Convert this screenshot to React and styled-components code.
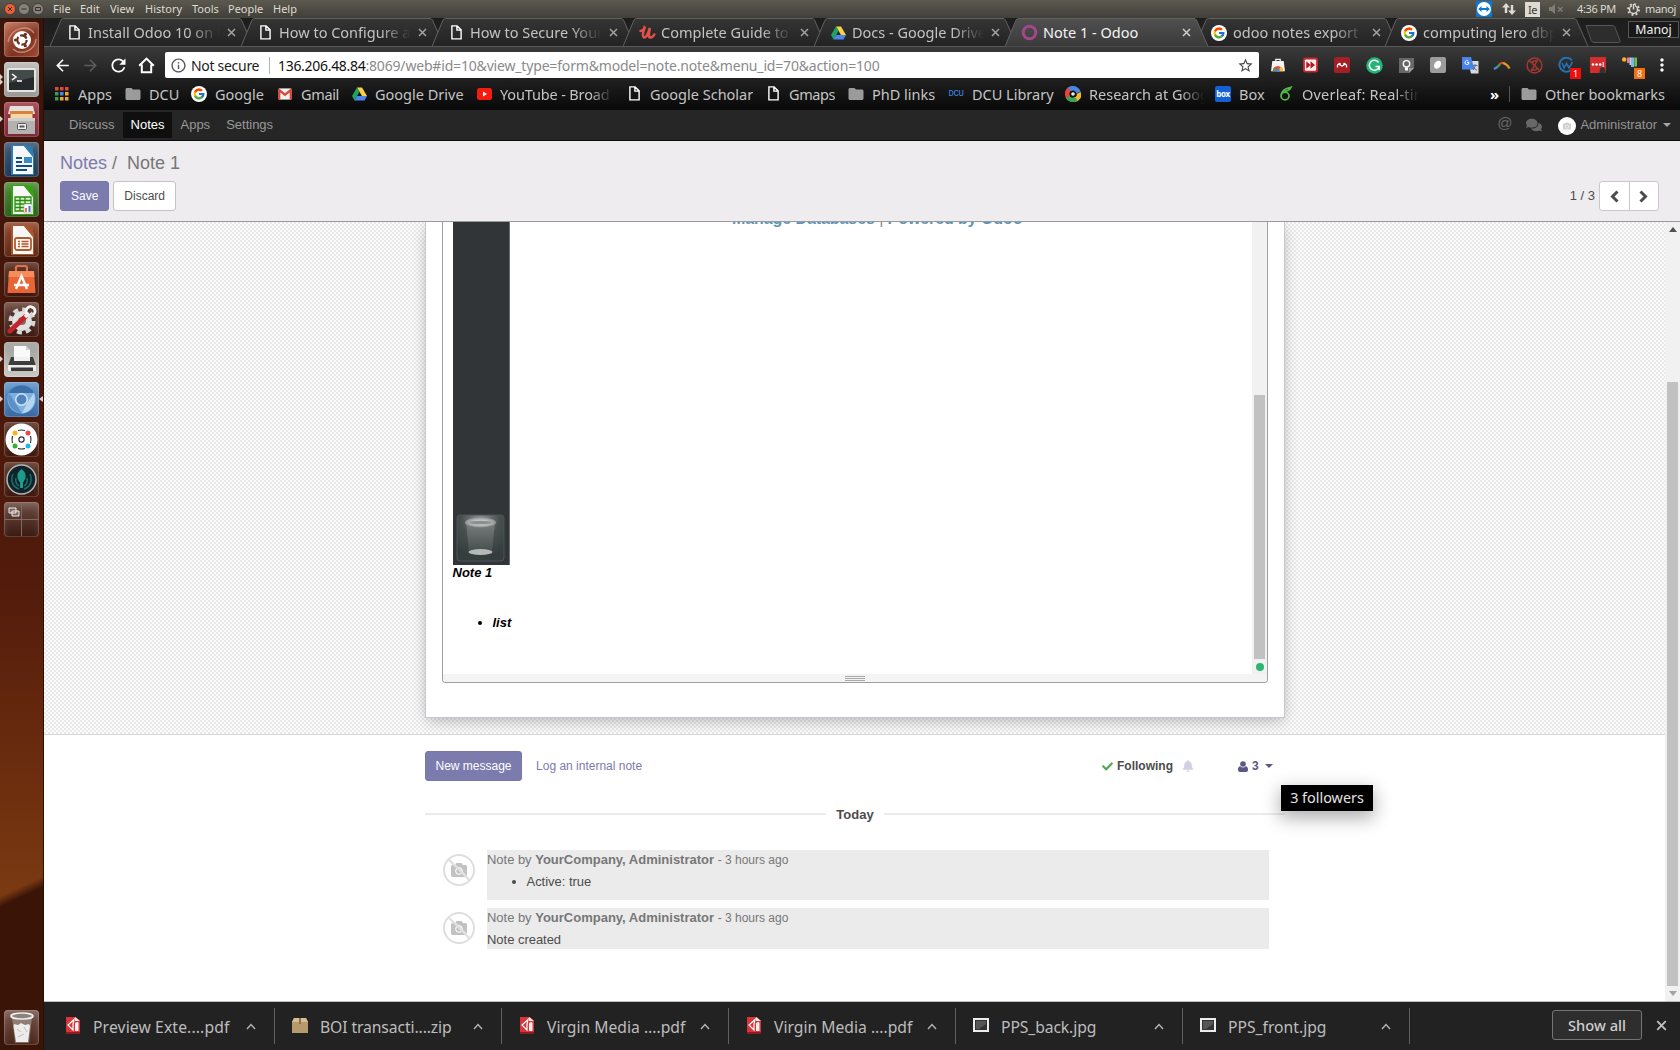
import React from "react";
import styled, { createGlobalStyle, css } from "styled-components";
import { FaCheck, FaBell, FaComments, FaCamera } from "react-icons/fa";
import { FcGoogle } from "react-icons/fc";
import { MdArrowBack, MdArrowForward, MdRefresh, MdInfoOutline, MdStarBorder, MdMoreVert, MdFolder } from "react-icons/md";

const Global = createGlobalStyle`
  html, body { margin: 0; padding: 0; background: #fff; overflow: hidden; }
  *, *::before, *::after { box-sizing: border-box; }
  svg { display: block; flex: none; }
`;

const UI = `"Noto Sans", sans-serif`;
const WEB = `"Liberation Sans", Arial, sans-serif`;

/* ---------- desktop shell ---------- */

const Desktop = styled.div`
  width: 1680px;
  height: 1050px;
  display: flex;
  flex-direction: column;
  overflow: hidden;
  font-family: ${UI};
`;

const MenuBar = styled.header`
  height: 18px;
  flex: none;
  display: flex;
  align-items: center;
  padding: 0 4px 0 4px;
  background: linear-gradient(#5b594f, #403f39);
  color: #dfdbd2;
  font-size: 11px;
  line-height: 18px;
`;

const WindowButtons = styled.div`
  display: flex;
  gap: 2px;
  width: 49px;
`;

const MenuItem = styled.span`
  width: ${(p) => p.$w}px;
  white-space: nowrap;
`;

const Indicators = styled.div`
  margin-left: auto;
  display: flex;
  align-items: center;
`;

const Indicator = styled.span`
  width: ${(p) => p.$w}px;
  display: flex;
  white-space: nowrap;
  letter-spacing: -0.35px;
`;

const KeyboardBadge = styled.span`
  width: 15px;
  height: 15px;
  background: #dfdbd2;
  color: #3c3b37;
  font-size: 11px;
  line-height: 15px;
  text-align: center;
`;

const Body = styled.div`
  flex: 1;
  min-height: 0;
  display: flex;
`;

const Launcher = styled.nav`
  width: 44px;
  flex: none;
  padding: 4px 0 5px;
  display: flex;
  flex-direction: column;
  align-items: center;
  gap: 5px;
  border-right: 1px solid #2a0f08;
  background:
    linear-gradient(155deg, transparent 83.5%, #3b1408 84.5%),
    linear-gradient(#3a150b 0%, #47170b 30%, #521b0b 55%, #6a2c0e 72%, #7c3b12 86%, #6d3010 100%);
`;

const Tile = styled.div`
  position: relative;
  width: 35px;
  height: 35px;
  flex: none;
  border-radius: 4px;
  display: flex;
  align-items: center;
  justify-content: center;
  background: ${(p) => p.$bg || "linear-gradient(#5a3022, #3d180e)"};
  box-shadow: inset 0 0 0 1px rgba(255, 255, 255, 0.16), inset 0 5px 7px rgba(255, 255, 255, 0.16);
  ${(p) => p.$last && css`margin-top: auto;`}
`;

const Pip = styled.i`
  position: absolute;
  top: ${(p) => p.$top || 14}px;
  ${(p) => (p.$right ? "right: -4px; border-right: 4px solid #d9d0cc;" : "left: -4px; border-left: 3px solid #d9d0cc;")}
  border-top: 3px solid transparent;
  border-bottom: 3px solid transparent;
`;

/* ---------- browser chrome ---------- */

const Browser = styled.main`
  flex: 1;
  min-width: 0;
  display: flex;
  flex-direction: column;
`;

const TabStrip = styled.div`
  height: 29px;
  flex: none;
  display: flex;
  padding-left: 6px;
  background: linear-gradient(#1d1d1d, #222);
  border-bottom: 1px solid #585858;
`;

const TabBox = styled.div`
  position: relative;
  width: ${(p) => (p.$narrow ? 190 : 191)}px;
  height: 29px;
  flex: none;
  display: flex;
  align-items: center;
  padding: 0 0 0 15.5px;
  z-index: ${(p) => (p.$active ? 2 : 1)};
  color: ${(p) => (p.$active ? "#f4f4f4" : "#c3c3c3")};
  font-size: 14.5px;
`;

const TabShape = styled.svg`
  position: absolute;
  left: 0;
  top: 0;
`;

const TabIcon = styled.span`
  position: relative;
  width: 17px;
  display: flex;
  justify-content: center;
`;

const TabTitle = styled.span`
  position: relative;
  width: 133px;
  margin-left: 5.5px;
  padding-bottom: 1px;
  overflow: hidden;
  white-space: nowrap;
  ${(p) => !p.$active && css`mask-image: linear-gradient(90deg, #000 76%, transparent 99%);`}
`;

const TabClose = styled.span`
  position: relative;
  margin-left: 5.5px;
`;

const NewTab = styled.svg`
  margin: 7px 0 0 10px;
`;

const ProfileButton = styled.span`
  margin: 3px 1px 0 auto;
  width: 51px;
  height: 17px;
  border: 1px solid #565656;
  background: #191919;
  color: #f1f1f1;
  font-size: 12.3px;
  line-height: 15px;
  text-align: center;
`;

const Toolbar = styled.div`
  height: 63px;
  flex: none;
  background: linear-gradient(#3a3a3a, #222 45%, #0b0b0b 95%);
`;

const NavRow = styled.div`
  height: 36px;
  display: flex;
  align-items: center;
  padding: 0 0 0 4px;
`;

const NavButton = styled.span`
  width: 28px;
  display: flex;
  justify-content: center;
  color: ${(p) => (p.$dim ? "#5c5c5c" : "#fff")};
`;

const AddressField = styled.div`
  width: 1094px;
  height: 26px;
  margin: 0 3px 0 5px;
  padding: 0 5px 0 5px;
  display: flex;
  align-items: center;
  background: #fff;
  border-radius: 2px;
  color: #8a8a8a;
  font-size: 14px;
  white-space: nowrap;
`;

const Secure = styled.span`
  margin-left: 4px;
  padding-right: 9px;
  width: 79px;
  line-height: 17px;
  border-right: 1px solid #b5b5b5;
  color: #1c1c1c;
  letter-spacing: -0.3px;
`;

const Url = styled.span`
  margin-left: 8px;
  flex: 1;
  letter-spacing: -0.175px;
  b { color: #111; font-weight: 400; letter-spacing: -0.3px; }
`;

const Extension = styled.span`
  position: relative;
  width: 32px;
  display: flex;
  justify-content: center;
`;

const Badge = styled.span`
  position: absolute;
  left: 20px;
  top: 11px;
  width: 11px;
  height: 11px;
  background: ${(p) => p.$bg};
  color: #fff;
  font-size: 9px;
  line-height: 11px;
  text-align: center;
`;

const BookmarkRow = styled.div`
  height: 27px;
  display: flex;
  align-items: center;
  padding: 0 0 6px 10px;
  color: #c4c4c4;
  font-size: 14.5px;
  line-height: 20px;
`;

const Bookmark = styled.span`
  width: ${(p) => p.$w}px;
  flex: none;
  display: flex;
  align-items: center;
  gap: 8px;
`;

const BookmarkIcon = styled.span`
  width: 16px;
  height: 16px;
  flex: none;
  display: flex;
  align-items: center;
  justify-content: center;
`;

const BookmarkText = styled.span`
  overflow: hidden;
  white-space: nowrap;
  letter-spacing: ${(p) => p.$ls || 0}px;
  ${(p) => p.$max && css`
    width: ${p.$max}px;
    mask-image: linear-gradient(90deg, #000 80%, transparent 100%);
  `}
`;

const DcuMark = styled.span`
  color: #3c8ae6;
  font: 9px/16px "Liberation Mono", monospace;
  letter-spacing: -0.4px;
`;

const BoxMark = styled.span`
  width: 16px;
  height: 16px;
  border-radius: 2px;
  background: #1461d3;
  color: #fff;
  font: bold 8px/16px "Open Sans", sans-serif;
  letter-spacing: -0.4px;
  text-align: center;
`;

const Overflow = styled.span`
  width: 19px;
  margin-left: auto;
  color: #fff;
  font-weight: 700;
  font-size: 15px;
  line-height: 16px;
`;

const Divider = styled.span`
  width: 1px;
  height: 16px;
  margin-right: 11px;
  background: #555;
`;

/* ---------- web application ---------- */

const AppNav = styled.div`
  height: 31px;
  flex: none;
  display: flex;
  align-items: center;
  padding: 0 9px 1px 17px;
  background: #262626;
  border-bottom: 1px solid #0b0b0b;
  font: 13px/26px ${WEB};
  color: #999;
`;

const AppLink = styled.span`
  padding: 0 8px;
  ${(p) => p.$active && css`background: #0f0f0f; color: #fff;`}
`;

const AppNavRight = styled.div`
  margin-left: auto;
  display: flex;
  align-items: center;
  color: #686868;
`;

const At = styled.span`
  font-size: 15px;
  margin-right: 14px;
  padding-bottom: 3px;
`;

const NavAvatar = styled.span`
  width: 18px;
  height: 18px;
  margin: 2px 4px 0 16px;
  border-radius: 50%;
  background: #fff;
  color: #cfcfcf;
  display: flex;
  align-items: center;
  justify-content: center;
`;

const UserName = styled.span`
  color: #949494;
  margin-right: 6px;
`;

const Caret = styled.i`
  border: 4px solid transparent;
  border-top-color: ${(p) => p.$color || "#a5a5a5"};
  border-bottom: 0;
`;

const ControlPanel = styled.section`
  height: 81px;
  flex: none;
  padding: 11px 21px 0 16px;
  background: #eeecee;
  border-bottom: 1px solid #9b9b9b;
  font-family: ${WEB};
  color: #4c4c4c;
`;

const Breadcrumb = styled.div`
  font-size: 18px;
  line-height: 22px;
  color: #777;
  white-space: pre;
  span { color: #7c7bad; }
`;

const ActionRow = styled.div`
  display: flex;
  align-items: center;
  margin-top: 7px;
`;

const Button = styled.button`
  height: 30px;
  padding: 0 ${(p) => (p.$tight ? 9.5 : 10)}px;
  margin: 0 4px 0 0;
  border: 1px solid ${(p) => (p.$primary ? "#7877a8" : "#c4c4c4")};
  border-radius: 3px;
  background: ${(p) => (p.$primary ? "#7c7bad" : "#fff")};
  color: ${(p) => (p.$primary ? "#fff" : "#4c4c4c")};
  font: 12px ${WEB};
`;

const Pager = styled.div`
  margin-left: auto;
  display: flex;
  align-items: center;
  font-size: 13px;
`;

const PageCount = styled.span`
  padding-bottom: 2px;
`;

const PagerButtons = styled.div`
  display: flex;
  height: 30px;
  width: 60px;
  margin-left: 4px;
  border: 1px solid #c9c9c9;
  border-radius: 3px;
  background: #fff;
  span { flex: 1; display: flex; align-items: center; justify-content: center; }
  span + span { border-left: 1px solid #c9c9c9; }
`;

const Viewport = styled.div`
  flex: 1;
  min-height: 0;
  display: flex;
  overflow: hidden;
  font-family: ${WEB};
`;

const Page = styled.div`
  flex: 1;
  min-width: 0;
  background: #fff;
`;

const SheetArea = styled.div`
  height: 513px;
  padding-left: 381px;
  overflow: hidden;
  border-bottom: 1px solid #d6d6d6;
  background: repeating-conic-gradient(#e9e9e9 0 25%, #fbfbfb 0 50%) 0 0 / 4px 4px;
`;

const Sheet = styled.div`
  width: 860px;
  height: 496px;
  padding: 0 16px;
  background: #fff;
  border: 1px solid #c8c8d3;
  border-top: 0;
  box-shadow: 0 4px 14px -2px rgba(0, 0, 0, 0.28);
`;

const Editor = styled.div`
  width: 826px;
  height: 461px;
  border: 1px solid #9f9f9f;
  border-top: 0;
  border-radius: 0 0 4px 4px;
  overflow: hidden;
`;

const EditorBody = styled.div`
  height: 452px;
  display: flex;
`;

const EditorText = styled.div`
  flex: 1;
  padding-left: 10px;
  color: #000;
  font: italic bold 13px/18px ${WEB};
  ul { margin: 32px 0 0; padding-left: 39.5px; }
`;

const NoteTitle = styled.div`
  margin: -1px 0 0 -0.5px;
`;

const PastedShot = styled.div`
  height: 343px;
  display: flex;
`;

const DarkDock = styled.div`
  width: 57px;
  height: 343px;
  display: flex;
  align-items: flex-end;
  background: #313538;
  border-right: 1px solid #6a6d70;
`;

const DatabaseLink = styled.span`
  margin: -13px 0 0 222px;
  height: 20px;
  color: #5f93b6;
  font: bold 16px/20px ${WEB};
  letter-spacing: -0.08px;
  white-space: nowrap;
  i { font-style: normal; font-weight: 400; color: #888; }
`;

const EditorScroll = styled.div`
  width: 15px;
  padding: 173px 2px 0;
  background: #f1f1f1;
  display: flex;
  flex-direction: column;
  align-items: center;
`;

const Thumb = styled.div`
  width: 11px;
  height: ${(p) => p.$h}px;
  background: #c1c1c1;
`;

const StatusDot = styled.div`
  width: 8px;
  height: 8px;
  margin-top: 4px;
  border-radius: 50%;
  background: #2bb673;
`;

const ResizeBar = styled.div`
  height: 8px;
  background: #f4f4f4;
  display: flex;
  flex-direction: column;
  align-items: center;
  justify-content: center;
  gap: 1px;
  span { width: 20px; height: 1px; background: #a9a9a9; }
`;

const Chatter = styled.section`
  width: 860px;
  margin-left: 381px;
  padding-top: 16px;
  font-size: 13px;
  color: #4c4c4c;
`;

const ChatterTop = styled.div`
  position: relative;
  height: 30px;
  display: flex;
  align-items: center;
  font-size: 12px;
`;

const LogLink = styled.span`
  margin-left: 10px;
  color: #7c7bad;
`;

const Following = styled.span`
  margin-left: auto;
  display: flex;
  align-items: center;
  gap: 4px;
  font-weight: 700;
`;

const BellSlot = styled.span`
  margin: 0 -1px 0 5px;
`;

const Followers = styled.span`
  margin: 0 12px 0 45px;
  width: 35px;
  display: flex;
  align-items: center;
  gap: 4px;
  font-weight: 700;
  color: #5a5788;
  i { margin-left: auto; }
`;

const Tooltip = styled.div`
  position: absolute;
  left: 856px;
  top: 34px;
  width: 92px;
  height: 26px;
  background: #000;
  color: #e3e3e3;
  font: 14.4px/25px ${UI};
  text-align: center;
  box-shadow: 0 6px 18px 1px rgba(0, 0, 0, 0.32);
`;

const DayRow = styled.div`
  height: 18px;
  margin-top: 24px;
  display: flex;
  align-items: center;
  gap: 10px;
  font-weight: 700;
  &::before, &::after { content: ""; flex: 1; height: 2px; background: #ebebeb; }
`;

const Message = styled.article`
  display: flex;
  align-items: flex-start;
  padding: 0 16px 0 18px;
  margin-top: ${(p) => p.$mt}px;
`;

const MessageAvatar = styled.div`
  width: 32px;
  height: 32px;
  margin: 4px 12px 0 0;
`;

const MessageBody = styled.div`
  flex: 1;
  height: ${(p) => p.$h}px;
  background: #ebebeb;
  line-height: 18px;
  letter-spacing: -0.03px;
  ul { margin: 4px 0 0; padding-left: 39.5px; }
  p { margin: 4px 0 0; }
`;

const MessageHead = styled.div`
  padding-top: 1px;
  color: #777;
  b { letter-spacing: 0; }
  small { font-size: 12px; letter-spacing: 0; }
`;

const PageScroll = styled.div`
  width: 15px;
  flex: none;
  display: flex;
  flex-direction: column;
  align-items: center;
  justify-content: space-between;
  padding: 5px 0 5px;
  background: #f1f1f1;
`;

const ScrollSpace = styled.div`
  flex: 1;
  display: flex;
  align-items: flex-end;
  padding-bottom: 5px;
`;

const ScrollArrow = styled.i`
  border: 4px solid transparent;
  ${(p) => (p.$up ? "border-bottom: 5px solid #505050; border-top: 0;" : "border-top: 5px solid #a3a3a3; border-bottom: 0;")}
`;

/* ---------- download shelf ---------- */

const Shelf = styled.footer`
  height: 49px;
  flex: none;
  display: flex;
  align-items: center;
  background: #222;
  border-top: 1px solid #bdbdbd;
  color: #bdbdbd;
  font-size: 15.7px;
  white-space: nowrap;
`;

const Download = styled.div`
  width: ${(p) => (p.$first ? 231 : 227)}px;
  height: 36px;
  display: flex;
  align-items: center;
  padding-left: ${(p) => (p.$first ? 20.5 : 16.5)}px;
  border-right: 1px solid #606060;
`;

const FileIcon = styled.span`
  width: 16px;
  display: flex;
  justify-content: center;
  padding-bottom: 2px;
`;

const DownloadName = styled.span`
  width: 153px;
  margin-left: 12.5px;
  padding-top: 1px;
  letter-spacing: ${(p) => p.$ls}px;
`;

const ShowAll = styled.button`
  margin: 0 14px 2px auto;
  width: 90px;
  height: 30px;
  padding: 0;
  border: 1px solid #757575;
  border-radius: 3px;
  background: #2e2e2e;
  color: #cfcfcf;
  font: 500 14.7px ${UI};
`;

const ShelfClose = styled.span`
  margin: 0 13px 1px 0;
`;

/* ---------- drawings ---------- */

const DocIcon = () => (
  <svg width="11" height="15" viewBox="0 0 11 15" fill="none" stroke="#fff" strokeWidth="1.4">
    <path d="M.9.9h5.200l4 4v9H.9zM5.900.9v4.200h4.200" />
  </svg>
);

const DriveIcon = () => (
  <svg width="15" height="14" viewBox="0 0 15 14">
    <path d="M5 .5h5l5 8.6h-5z" fill="#ffcf48" />
    <path d="M5 .5 0 9.1l2.5 4.4 5-8.7z" fill="#1da462" />
    <path d="M5 9.1h10l-2.5 4.4h-10z" fill="#4b86f0" />
  </svg>
);

const GoogleBall = () => (
  <svg width="16" height="16" viewBox="0 0 16 16">
    <circle cx="8" cy="8" r="8" fill="#fff" />
    <FcGoogle x="1.5" y="1.5" size={13} />
  </svg>
);

const UdemyIcon = () => (
  <svg width="17" height="15" viewBox="0 0 17 15" fill="none" stroke="#e2504c" strokeWidth="2.600" strokeLinecap="round">
    <path d="M1.500 6C4 6 6 3 5.500 2.500 4.500 6 2.500 11.500 5 12.500 8 13 9.500 7 10.800 3 10 8 9 12.500 11.500 12.500c2 0 3-1.500 3.800-3" />
  </svg>
);

const RingIcon = () => (
  <svg width="17" height="17" viewBox="0 0 17 17">
    <circle cx="8.500" cy="8.500" r="6.300" fill="none" stroke="#a2478a" strokeWidth="3" />
  </svg>
);

const HomeIcon = () => (
  <svg width="17" height="17" viewBox="0 0 17 17" fill="none" stroke="#fff" strokeWidth="2">
    <path d="M1.200 8.800 8.500 1.600l7.300 7.200M3.800 7.500v7.700h9.400V7.500" />
  </svg>
);

const AppsGrid = () => (
  <svg width="14" height="14" viewBox="0 0 14 14">
    {["#e0483e", "#e0483e", "#e0483e", "#3b9c58", "#4a86e8", "#f0a62f", "#3b9c58", "#f0a62f", "#f0a62f"].map((c, i) => (
      <rect key={i} x={(i % 3) * 5} y={Math.floor(i / 3) * 5} width="3.500" height="3.500" fill={c} />
    ))}
  </svg>
);

const GmailIcon = () => (
  <svg width="14" height="12" viewBox="0 0 15 12">
    <path d="M1 0h13v12H1z" fill="#f2f2f2" />
    <path d="M0 1.200C0 .5.500 0 1.200 0L7.500 5.200 13.800 0c.7 0 1.200.5 1.200 1.200V12h-2.500V4.300l-5 4-5-4V12H0z" fill="#d54b3d" />
  </svg>
);

const YouTubeIcon = () => (
  <svg width="15" height="12" viewBox="0 0 15 12">
    <rect width="15" height="12" rx="2.500" fill="#f61c0d" />
    <path d="M6 3.500 10 6 6 8.500z" fill="#fff" />
  </svg>
);

const ResearchIcon = () => (
  <svg width="16" height="16" viewBox="0 0 16 16" fill="none" strokeWidth="4.500">
    <path d="M13.500 7C15 10 13 13 9.500 13.800" stroke="#f4b932" />
    <path d="M11 12.500C8 15 4 14 2.300 10.500" stroke="#3aa757" />
    <path d="M3.500 11C1 8.500 2 4 5.500 2.500" stroke="#e2473c" />
    <path d="M4.500 3.500C7 1 12 2 13.500 6.500" stroke="#4a86e8" />
    <circle cx="8" cy="8" r="1.800" fill="#e9eef8" />
  </svg>
);

const OverleafIcon = () => (
  <svg width="14" height="15" viewBox="0 0 14 15" fill="none" stroke="#54b948" strokeWidth="1.700">
    <ellipse cx="6" cy="10" rx="4" ry="3.900" />
    <path d="M2.200 9C2.500 5 6 2.500 12 1.300 10.500 4 8 5.200 5.500 5.200" />
  </svg>
);

const CloseMark = ({ color, size = 9 }) => (
  <svg width={size} height={size} viewBox="0 0 9 9" stroke={color} strokeWidth="1.500">
    <path d="M1 1l7 7M8 1 1 8" />
  </svg>
);

const Chevron = ({ d }) => (
  <svg width="11" height="13" viewBox="0 0 11 13" fill="none" stroke="#4c4c4c" strokeWidth="3"><path d={d} /></svg>
);

const PersonIcon = () => (
  <svg width="10" height="11" viewBox="0 0 10 11" fill="#5a5788">
    <circle cx="5" cy="3" r="2.800" />
    <path d="M0 8.800C0 6.500.8 5.200 2.300 5.200a4 4 0 0 0 5.400 0C9.200 5.200 10 6.500 10 8.800 10 10.200 9.200 11 8 11H2C.8 11 0 10.200 0 8.800z" />
  </svg>
);

const extensionDrawings = [
  <svg key="store" width="14" height="14" viewBox="0 0 16 16"><path d="M5.500 4V1.500h5V4" fill="none" stroke="#eee" strokeWidth="1.500" /><path d="M1.500 3.500h13L16 15H0z" fill="#f3f3f3" /><path d="M2 15a6 6 0 0 1 12 0z" fill="#e44b3d" /><path d="M2 15a6 6 0 0 1 3-5.200L8 15z" fill="#e44b3d" /><path d="M14 15a6 6 0 0 0-3-5.200L8 15z" fill="#f7c52f" /><path d="M2 15a6 6 0 0 1 1.200-3.600L8 15z" fill="#3aa757" /><circle cx="8" cy="14" r="2" fill="#4a86e8" /></svg>,
  <svg key="ff" width="15" height="16" viewBox="0 0 16 16"><rect width="16" height="16" rx="2.500" fill="#c6262e" /><rect x="2" y="2" width="12" height="12" rx="1" fill="#f7eeee" /><path d="M3.500 4v8L8 8zM8 4v8l4.800-4z" fill="#b3161e" /></svg>,
  <svg key="m" width="16" height="16" viewBox="0 0 16 16"><rect width="16" height="16" rx="2" fill="#a31f25" /><path d="M3.500 10.500V9a1.400 1.400 0 0 1 2.200-1.500c.8.500 1 1.500 2.300 1.500s1.500-1 2.300-1.500A1.400 1.400 0 0 1 12.500 9v1.500" stroke="#fff" strokeWidth="1.300" fill="none" /><circle cx="5.600" cy="7" r="1.200" fill="#fff" /><circle cx="10.400" cy="7" r="1.200" fill="#fff" /></svg>,
  <svg key="g" width="17" height="17" viewBox="0 0 17 17"><circle cx="8.500" cy="8.500" r="8.300" fill="#25b377" /><path d="M12.500 5.500A5 5 0 1 0 13.200 9.500H9.500M13.200 9.500V13" fill="none" stroke="#fff" strokeWidth="1.500" /></svg>,
  <svg key="keep" width="15" height="15" viewBox="0 0 15 15"><path d="M0 0h15v10l-5 5H0z" fill="#686868" /><path d="M10 15v-5h5z" fill="#999" /><circle cx="7.500" cy="5.800" r="3.200" fill="none" stroke="#fff" strokeWidth="1.400" /><path d="M6 9.500h3v3H6z" fill="#fff" /></svg>,
  <svg key="white" width="16" height="16" viewBox="0 0 16 16"><rect width="16" height="16" rx="2" fill="#9c9c9c" /><path d="M4 9c0-3 3-6 6-5 2 2 1 6-2 7.500C5.500 12 4 11 4 9z" fill="#fff" /></svg>,
  <svg key="tr" width="17" height="17" viewBox="0 0 17 17"><path d="M6 4h10.500v12.500H9z" fill="#d6d9de" /><path d="M0 0h9l3.500 12.500H0z" fill="#4a85ee" /><path d="M7 5.500H5.200M7 5.500A2 2 0 1 1 6.300 4" stroke="#fff" fill="none" /><path d="M10.500 8.500h5M13 7v1.500c0 2-1 3.500-2 4.500M11.500 9.500c.5 2 2 3 3.500 3.800" stroke="#5b6f8e" fill="none" /></svg>,
  <svg key="arc" width="18" height="16" viewBox="0 0 18 16" fill="none" strokeWidth="2.300"><path d="M1 12l3.500-2" stroke="#4a86e8" /><path d="M4 10.200l3-3" stroke="#3aa757" /><path d="M6.500 7.300c2-2 4-2 6 0" stroke="#d9482f" /><path d="M10 6c2 .5 4.500 2 6.500 5.500" stroke="#e89b25" /></svg>,
  <svg key="s" width="17" height="17" viewBox="0 0 16 16" fill="none" stroke="#a5372f" strokeWidth="1.400"><circle cx="8" cy="8" r="7" /><path d="M11 4.500C9 2.500 5.500 4 6 6s4.500 2.500 4 4.800S6 13 5 11M2.500 2.500l11 11M11 2.500 5 13.500" /></svg>,
  <svg key="w" width="16" height="16" viewBox="0 0 16 16" fill="none" stroke="#2272b4" strokeWidth="2"><path d="M14 3.500A7 7 0 1 0 13 13" /><path d="M4 6l2 5 2.500-4.500L11 11l3.500-6" strokeWidth="1.600" /></svg>,
  <svg key="lp" width="16" height="16" viewBox="0 0 16 16"><rect width="16" height="16" fill="#d32d2d" /><circle cx="3" cy="7.500" r="1.300" fill="#fff" /><circle cx="6.600" cy="7.500" r="1.300" fill="#fff" /><circle cx="10.200" cy="7.500" r="1.300" fill="#fff" /><path d="M13.200 5v5" stroke="#fff" /><path d="M9.500 16c0-4 1-6 3-6s3 2 3 6z" fill="#333" /></svg>,
  <svg key="bars" width="16" height="16" viewBox="0 0 16 16"><circle cx="2.200" cy="2.500" r="2.200" fill="#f3b52e" /><path d="M5 .5h2.500V6H5z" fill="#e87f86" /><path d="M7.500.5H9V8H7.500z" fill="#d8c8e8" /><path d="M9 .5h3V10H9z" fill="#78b9e4" /><path d="M12.300.5H15V9.500h-2.700z" fill="#6fbf4c" /></svg>,
];

const PdfIcon = () => (
  <svg width="14" height="17" viewBox="0 0 14 17">
    <path d="M0 0h10l4 4v13H0z" fill="#d8343a" /><path d="M0 15h14v2H0z" fill="#8e1b20" />
    <path d="M9 0v4h5z" fill="#f7e9e9" /><path d="M8 2.500 2 8l5 5V7z" fill="none" stroke="#fff" strokeWidth="1.200" /><path d="M9 6q3-2 3.500 0v8H9z" fill="#eee" />
  </svg>
);
const ZipIcon = () => (
  <svg width="16" height="15" viewBox="0 0 16 15"><path d="M2 0h12l2 4v11H0V4z" fill="#b79a6c" /><path d="M2 0h12l2 4H0z" fill="#d6bf97" /><path d="M7 0h2v6H7z" fill="#8f7449" /></svg>
);
const JpgIcon = () => (
  <svg width="16" height="14" viewBox="0 0 16 14"><rect x="1" y="1" width="14" height="12" fill="#333" stroke="#ededed" strokeWidth="2" /><path d="M3 3h10v3L6 11H3z" fill="#565656" /></svg>
);

const OfficeDoc = ({ fold, children }) => (
  <svg width="28" height="32" viewBox="0 0 28 32">
    <path d="M3 1h16l7 8v22H3z" fill={fold} /><path d="M5 2h11l9 11v17H5z" fill="#f7f7f7" /><path d="M16 2h9v11z" fill={fold} opacity=".9" />{children}
  </svg>
);

const tiles = [
  { bg: "linear-gradient(135deg,#c06a50,#7f3320 60%,#a04a33)", art: <svg width="30" height="30" viewBox="0 0 30 30"><path d="M1 17C4 3 20-1 27 8M29 14c-1 12-15 17-23 10" stroke="#e6b7a6" strokeWidth="1.500" fill="none" opacity=".6" /><circle cx="15" cy="15" r="9" fill="#fff" /><circle cx="15" cy="15" r="4.700" fill="none" stroke="#6a3020" strokeWidth="2.200" strokeDasharray="7.800 2" /><g fill="#6a3020"><circle cx="8.500" cy="15" r="1.600" /><circle cx="18.300" cy="9.300" r="1.600" /><circle cx="18.300" cy="20.700" r="1.600" /></g></svg> },
  { bg: "linear-gradient(#b9b9b5,#9a9995)", left: 2, art: <svg width="29" height="24" viewBox="0 0 29 24"><rect width="29" height="24" rx="2" fill="#e4e4e0" /><rect x="2" y="2" width="25" height="20" fill="#262a2a" /><path d="M2 2h25v7L2 15z" fill="#444a4a" /><path d="M5 6l4 3-4 3M10 13h5" stroke="#fff" strokeWidth="1.500" fill="none" /></svg> },
  { bg: "linear-gradient(#a13a4b,#7b2535)", left: 1, art: <svg width="27" height="30" viewBox="0 0 27 30"><path d="M2 1h23l2 8H0z" fill="#e4e1dd" /><path d="M2 6h23v8H2z" fill="#d9823f" /><path d="M3 9h21v4H3z" fill="#f5d7a9" /><path d="M0 13h27v16H0z" fill="#b3b2af" /><path d="M0 13h27v3H0z" fill="#cfcecb" /><rect x="9.500" y="18.500" width="9" height="6" rx="1" fill="#eee" stroke="#555" /><path d="M11.500 21.500h5" stroke="#555" strokeWidth="2" /></svg> },
  { bg: "linear-gradient(#3f566f,#1e3854)", art: <OfficeDoc fold="#2b7eb4"><path d="M8 14h6M8 18h6M8 22h16M8 26h11" stroke="#0f5280" strokeWidth="2" /><rect x="16" y="13" width="8" height="6" fill="#3b8cc0" /></OfficeDoc> },
  { bg: "linear-gradient(#4f8a37,#2b5d1c)", art: <OfficeDoc fold="#35a30f"><path d="M7 13h16v14H7zM7 16.500h16M7 20h16M7 23.500h16M12 13v14M17 13v14" fill="#d9f2cf" stroke="#2a8c10" strokeWidth="1.300" /><rect x="16" y="20" width="8" height="9" fill="#fff" stroke="#999" strokeWidth=".6" /><path d="M18 28v-4" stroke="#e37b3a" strokeWidth="2" /><path d="M21.500 28v-6" stroke="#3c7fc0" strokeWidth="2" /></OfficeDoc> },
  { bg: "linear-gradient(#8f4a2c,#5b2613)", art: <OfficeDoc fold="#a8552f"><rect x="7" y="14" width="16" height="12" rx="2" fill="none" stroke="#b4592c" strokeWidth="1.800" /><path d="M10 17.500h2M10 20h2M10 22.500h2M13.500 17.500h7M13.500 20h7M13.500 22.500h7" stroke="#b4592c" strokeWidth="1.500" /></OfficeDoc> },
  { art: <svg width="31" height="32" viewBox="0 0 31 32"><path d="M10 8V4q0-2 2-2h7q2 0 2 2v4" fill="none" stroke="#e3714b" strokeWidth="2.200" /><path d="M3 7h25l1.500 22h-28z" fill="#ea6534" /><path d="M3 7h25l.5 6H2.500z" fill="#f58c5b" /><path d="M10 25 15.500 12 21 25M8 21h15" stroke="#fff" strokeWidth="2.400" fill="none" /></svg> },
  { bg: "linear-gradient(#6a453b,#3a1a12)", art: <svg width="30" height="30" viewBox="0 0 30 30"><circle cx="15" cy="16" r="11.500" fill="none" stroke="#d6d6d6" strokeWidth="4" strokeDasharray="5 4" /><circle cx="15" cy="16" r="10" fill="#e2e2e2" /><circle cx="15" cy="16" r="4" fill="#8b6c64" /><path d="M3 26 18 12" stroke="#c3242c" strokeWidth="5" strokeLinecap="round" /><path d="M18 12l4-4" stroke="#efefef" strokeWidth="3.500" /><path d="M20 9a4.500 4.500 0 1 1 6 1" fill="none" stroke="#f5f5f5" strokeWidth="2.800" /></svg> },
  { bg: "linear-gradient(#9b9b98,#c9c9c6)", left: 1, art: <svg width="30" height="29" viewBox="0 0 30 29"><path d="M7 1h12l4 4v12H7z" fill="#fafafa" /><path d="M19 1v4h4z" fill="#ccc" /><path d="M4 12h22l3 9H1z" fill="#3d3d3d" /><path d="M7 12h16v4H7z" fill="#f0f0f0" /><path d="M1 20h28v6H1z" fill="#ededed" /><path d="M4 22.500h22v3.500H4z" fill="#3a3a3a" /></svg> },
  { bg: "linear-gradient(#5f96cb,#3768a3)", left: 1, right: 1, art: <svg width="31" height="31" viewBox="0 0 31 31"><circle cx="15.500" cy="15.500" r="14" fill="#7fb0de" /><path d="M3 9a14 14 0 0 1 25 0z" fill="#3c6ea9" /><path d="M28 9c3 9-2 19-12 20.500L21 19z" fill="#b5d5f0" /><path d="M3 9c-3 9 2 19 13 20.500L10 20z" fill="#5b91c8" /><circle cx="15.500" cy="15.500" r="6.500" fill="#d4e6f6" /><circle cx="15.500" cy="15.500" r="5" fill="#4f83bd" /></svg> },
  { art: <svg width="33" height="33" viewBox="0 0 33 33"><circle cx="16.500" cy="16.500" r="16" fill="#fff" /><path d="M13 7.500q3.500-1 7 0M13 25.500q3.500 1 7 0M7.500 13q-1 3.500 0 7M25.500 13q1 3.500 0 7" fill="none" stroke="#333" strokeWidth="1.200" /><circle cx="16.500" cy="16.500" r="2.600" fill="none" stroke="#333" strokeWidth="1.200" /><circle cx="10" cy="10" r="2.500" fill="#f5b51f" /><circle cx="23" cy="10" r="2.500" fill="#ea4747" /><circle cx="10" cy="23" r="2.500" fill="#35b32e" /><circle cx="23" cy="23" r="2.500" fill="#22b6e8" /></svg> },
  { art: <svg width="31" height="31" viewBox="0 0 31 31"><circle cx="15.500" cy="15.500" r="14.500" fill="#10242a" stroke="#aeb8b8" strokeWidth="1.500" /><path d="M15.500 5q5 3.500 4 9l-2 4h-4l-2-4q-1-5.500 4-9zM14 18h3v6h-3z" fill="#1d9c8b" /><path d="M7 10c-3 7 0 13 6 15M24 10c3 7 0 13-6 15M10 14c-1 4 0 6 3 8M21 14c1 4 0 6-3 8" fill="none" stroke="#1a6f69" strokeWidth="1.500" /></svg> },
  { bg: "linear-gradient(#6b4c42,#3a1a11)", art: <svg width="35" height="35" viewBox="0 0 35 35" fill="none" stroke="#84685e"><path d="M17.500 1v33M1 17.500h33" /><path d="M5 6h7v5H5zM8 9h7v5H8z" stroke="#eee" fill="#7c655c" /></svg> },
];

const TrashArt = () => (
  <svg width="28" height="33" viewBox="0 0 28 33">
    <path d="M4 6h20l-3 26H7z" fill="#b3aba7" opacity=".55" />
    <path d="M6 13l4 1 3-2 4 2 4-1 1 2-2 16H8L5.500 15z" fill="#ececea" />
    <path d="M9 18l4 3M16 16l3 5M10 26l6-3" stroke="#bbb" fill="none" />
    <ellipse cx="14" cy="5" rx="11" ry="3" fill="#8c827d" stroke="#eee" strokeWidth="1.700" />
  </svg>
);

const GlassBin = () => (
  <svg width="56" height="56" viewBox="0 0 56 56">
    <defs>
      <radialGradient id="glow" cx=".5" cy=".1" r=".8"><stop offset="0" stopColor="#8e9492" /><stop offset=".5" stopColor="#495150" /><stop offset="1" stopColor="#363d3f" /></radialGradient>
      <linearGradient id="glass" x2="0" y2="1"><stop offset="0" stopColor="#7b8180" /><stop offset="1" stopColor="#464d4d" /></linearGradient>
      <radialGradient id="rim"><stop offset="0" stopColor="#f4f4f4" /><stop offset="1" stopColor="#8d9392" /></radialGradient>
    </defs>
    <rect x="4" y="6" width="47" height="46" rx="3" fill="url(#glow)" stroke="#4d5557" />
    <path d="M13 12h29l-3 31H16z" fill="url(#glass)" />
    <ellipse cx="27.500" cy="13.500" rx="15.500" ry="5" fill="url(#rim)" />
    <ellipse cx="27.500" cy="13.500" rx="11" ry="1.800" fill="#8a908f" />
    <ellipse cx="27.500" cy="43" rx="12" ry="3" fill="#b4b8b7" />
  </svg>
);

const NoPhoto = () => (
  <svg width="32" height="32" viewBox="0 0 32 32">
    <FaCamera x="8" y="8" size={16} color="#c2c2c2" />
    <circle cx="16" cy="16" r="15" fill="none" stroke="#dedede" strokeWidth="2" />
    <path d="M6.500 5.500l20 20" stroke="#f4f4f4" strokeWidth="1.500" /><path d="M5.500 5.500l21 21" stroke="#dedede" strokeWidth="1.800" />
  </svg>
);

const WinButton = ({ fill, glyph }) => (
  <svg width="12" height="12" viewBox="0 0 12 12"><circle cx="6" cy="6" r="5.500" fill={fill} stroke="#33322e" strokeWidth=".7" /><path d={glyph} stroke="#3a2a22" fill="none" /></svg>
);

/* ---------- data ---------- */

const tabs = [
  ["Install Odoo 10 on U", <DocIcon />],
  ["How to Configure a", <DocIcon />],
  ["How to Secure Your", <DocIcon />],
  ["Complete Guide to", <UdemyIcon />],
  ["Docs - Google Drive", <DriveIcon />],
  ["Note 1 - Odoo", <RingIcon />],
  ["odoo notes export", <GoogleBall />],
  ["computing lero dbp", <GoogleBall />],
];

const folder = <MdFolder size={18} color="#9b9b9b" />;

const bookmarks = [
  [71, "Apps", <AppsGrid />],
  [66, "DCU", folder],
  [86, "Google", <GoogleBall />],
  [74, "Gmail", <GmailIcon />, 0, -0.35],
  [125, "Google Drive", <DriveIcon />],
  [150, "YouTube - Broad", <YouTubeIcon />, 113, -0.15],
  [139, "Google Scholar", <DocIcon />],
  [83, "Gmaps", <DocIcon />, 0, -0.4],
  [100, "PhD links", folder],
  [117, "DCU Library", <DcuMark>DCU</DcuMark>],
  [150, "Research at Goog", <ResearchIcon />, 115],
  [63, "Box", <BoxMark>box</BoxMark>],
  [145, "Overleaf: Real-tim", <OverleafIcon />, 117, 0.2],
];

const downloads = [
  ["Preview Exte....pdf", <PdfIcon />, 0.12],
  ["BOI transacti....zip", <ZipIcon />, -0.1],
  ["Virgin Media ....pdf", <PdfIcon />, 0],
  ["Virgin Media ....pdf", <PdfIcon />, 0],
  ["PPS_back.jpg", <JpgIcon />, -0.1],
  ["PPS_front.jpg", <JpgIcon />, 0],
];

function Tab({ title, icon, active, narrow }) {
  return (
    <TabBox $active={active} $narrow={narrow}>
      <TabShape width="204" height="29" viewBox="0 0 204 29">
        <defs>
          <linearGradient id={active ? "tabOn" : "tabOff"} x2="0" y2="1">
            <stop offset="0" stopColor={active ? "#505050" : "#353535"} />
            <stop offset="1" stopColor={active ? "#3a3a3a" : "#222"} />
          </linearGradient>
        </defs>
        <path d="M0 28.500 11 2Q12 .5 13.500.5H189Q190.500.5 191.500 2L203 28.500" fill={active ? "url(#tabOn)" : "url(#tabOff)"} stroke="#616161" />
        {!active && <path d="M0 28.500h204" stroke="#585858" />}
      </TabShape>
      <TabIcon>{icon}</TabIcon>
      <TabTitle $active={active}>{title}</TabTitle>
      <TabClose><CloseMark color={active ? "#cfcfcf" : "#a2a2a2"} /></TabClose>
    </TabBox>
  );
}

export default function App() {
  return (
    <Desktop>
      <Global />
      <MenuBar>
        <WindowButtons>
          <WinButton fill="#e9603a" glyph="M4 4l4 4M8 4 4 8" />
          <WinButton fill="#85827b" glyph="M3.500 6h5" />
          <WinButton fill="#85827b" glyph="M3.500 4.500h5v3h-5z" />
        </WindowButtons>
        <MenuItem $w={27}>File</MenuItem>
        <MenuItem $w={30}>Edit</MenuItem>
        <MenuItem $w={35}>View</MenuItem>
        <MenuItem $w={47}>History</MenuItem>
        <MenuItem $w={36}>Tools</MenuItem>
        <MenuItem $w={45}>People</MenuItem>
        <MenuItem $w={30}>Help</MenuItem>
        <Indicators>
          <Indicator $w={26}>
            <svg width="16" height="16" viewBox="0 0 16 16"><rect width="16" height="16" fill="#0f76d1" /><circle cx="8" cy="8" r="7" fill="#fff" /><path d="M2.200 8 5.500 5v2h5V5l3.300 3-3.300 3V9h-5v2z" fill="#0f76d1" /></svg>
          </Indicator>
          <Indicator $w={23}>
            <svg width="14" height="14" viewBox="0 0 14 14" fill="#dfdbd2"><path d="M4 1 0 5.500h2.800V11h2.400V5.500H8zM10 13l4-4.500h-2.800V3H8.800v5.500H6z" /></svg>
          </Indicator>
          <Indicator $w={24}><KeyboardBadge>Ie</KeyboardBadge></Indicator>
          <Indicator $w={28}>
            <svg width="15" height="12" viewBox="0 0 15 12" fill="#7f7d75"><path d="M0 4h2.500L6 1v10L2.500 8H0z" /><path d="M9 4l4.500 4.500M13.500 4 9 8.500" stroke="#7f7d75" strokeWidth="1.300" /></svg>
          </Indicator>
          <Indicator $w={50}>4:36 PM</Indicator>
          <Indicator $w={18}>
            <svg width="13" height="13" viewBox="0 0 13 13" fill="none" stroke="#dfdbd2"><circle cx="6.500" cy="6.500" r="5.500" strokeWidth="1.800" strokeDasharray="1.900 2.400" /><circle cx="6.500" cy="6.500" r="4" strokeWidth="1.400" /><path d="M6.500 2v5" stroke="#504e46" strokeWidth="3" /><path d="M6.500 1v5.500" strokeWidth="1.400" /></svg>
          </Indicator>
          <Indicator $w={31}>manoj</Indicator>
        </Indicators>
      </MenuBar>

      <Body>
        <Launcher>
          {tiles.map((t, i) => (
            <Tile key={i} $bg={t.bg}>
              {t.left === 1 && <Pip />}
              {t.left === 2 && <><Pip $top={12} /><Pip $top={17} /></>}
              {t.art}
              {t.right && <Pip $right />}
            </Tile>
          ))}
          <Tile $last $bg="linear-gradient(#76554a,#4a2418)"><TrashArt /></Tile>
        </Launcher>

        <Browser>
          <TabStrip>
            {tabs.map(([title, icon], i) => <Tab key={i} title={title} icon={icon} active={i === 5} narrow={i > 4} />)}
            <NewTab width="36" height="18" viewBox="0 0 36 18"><path d="M1 .5h26q2 0 3 2l5 13q.5 2-1.500 2H9q-2 0-2.800-2z" fill="#2d2d2d" stroke="#555" /></NewTab>
            <ProfileButton>Manoj</ProfileButton>
          </TabStrip>

          <Toolbar>
            <NavRow>
              <NavButton><MdArrowBack size={19} /></NavButton>
              <NavButton $dim><MdArrowForward size={19} /></NavButton>
              <NavButton><MdRefresh size={21} /></NavButton>
              <NavButton><HomeIcon /></NavButton>
              <AddressField>
                <MdInfoOutline size={17} color="#5a5a5a" />
                <Secure>Not secure</Secure>
                <Url><b>136.206.48.84</b>:8069/web#id=10&amp;view_type=form&amp;model=note.note&amp;menu_id=70&amp;action=100</Url>
                <MdStarBorder size={17} color="#4c4c4c" />
              </AddressField>
              {extensionDrawings.map((art, i) => (
                <Extension key={i}>
                  {art}
                  {i === 9 && <Badge $bg="#f00d0d">1</Badge>}
                  {i === 11 && <Badge $bg="#f46f12">8</Badge>}
                </Extension>
              ))}
              <Extension><MdMoreVert size={20} color="#fff" /></Extension>
            </NavRow>
            <BookmarkRow>
              {bookmarks.map(([w, text, icon, max, ls]) => (
                <Bookmark key={text} $w={w}>
                  <BookmarkIcon>{icon}</BookmarkIcon>
                  <BookmarkText $max={max} $ls={ls}>{text}</BookmarkText>
                </Bookmark>
              ))}
              <Overflow>»</Overflow>
              <Divider />
              <Bookmark $w={159}>
                <BookmarkIcon>{folder}</BookmarkIcon>
                <BookmarkText>Other bookmarks</BookmarkText>
              </Bookmark>
            </BookmarkRow>
          </Toolbar>

          <AppNav>
            <AppLink>Discuss</AppLink>
            <AppLink $active>Notes</AppLink>
            <AppLink>Apps</AppLink>
            <AppLink>Settings</AppLink>
            <AppNavRight>
              <At>@</At>
              <FaComments size={16} />
              <NavAvatar><FaCamera size={8} /></NavAvatar>
              <UserName>Administrator</UserName>
              <Caret />
            </AppNavRight>
          </AppNav>

          <ControlPanel>
            <Breadcrumb><span>Notes</span> /  Note 1</Breadcrumb>
            <ActionRow>
              <Button $primary>Save</Button>
              <Button>Discard</Button>
              <Pager>
                <PageCount>1 / 3</PageCount>
                <PagerButtons>
                  <span><Chevron d="M8.500 1.500l-5 5 5 5" /></span>
                  <span><Chevron d="M2.500 1.500l5 5-5 5" /></span>
                </PagerButtons>
              </Pager>
            </ActionRow>
          </ControlPanel>

          <Viewport>
            <Page>
              <SheetArea>
                <Sheet>
                  <Editor>
                    <EditorBody>
                      <EditorText>
                        <PastedShot>
                          <DarkDock><GlassBin /></DarkDock>
                          <DatabaseLink>Manage Databases <i>|</i> Powered by Odoo</DatabaseLink>
                        </PastedShot>
                        <NoteTitle>Note 1</NoteTitle>
                        <ul><li>list</li></ul>
                      </EditorText>
                      <EditorScroll><Thumb $h={264} /><StatusDot /></EditorScroll>
                    </EditorBody>
                    <ResizeBar><span /><span /><span /></ResizeBar>
                  </Editor>
                </Sheet>
              </SheetArea>

              <Chatter>
                <ChatterTop>
                  <Button $primary $tight>New message</Button>
                  <LogLink>Log an internal note</LogLink>
                  <Following>
                    <FaCheck size={11} color="#52a552" />
                    Following
                    <BellSlot><FaBell size={12} color="#d3d0e2" /></BellSlot>
                  </Following>
                  <Followers>
                    <PersonIcon />3<Caret $color="#5a5788" />
                  </Followers>
                  <Tooltip>3 followers</Tooltip>
                </ChatterTop>
                <DayRow>Today</DayRow>
                <Message $mt={27}>
                  <MessageAvatar><NoPhoto /></MessageAvatar>
                  <MessageBody $h={50}>
                    <MessageHead>Note by <b>YourCompany, Administrator</b> <small>- 3 hours ago</small></MessageHead>
                    <ul><li>Active: true</li></ul>
                  </MessageBody>
                </Message>
                <Message $mt={8}>
                  <MessageAvatar><NoPhoto /></MessageAvatar>
                  <MessageBody $h={41}>
                    <MessageHead>Note by <b>YourCompany, Administrator</b> <small>- 3 hours ago</small></MessageHead>
                    <p>Note created</p>
                  </MessageBody>
                </Message>
              </Chatter>
            </Page>
            <PageScroll>
              <ScrollArrow $up />
              <ScrollSpace><Thumb $h={604} /></ScrollSpace>
              <ScrollArrow />
            </PageScroll>
          </Viewport>

          <Shelf>
            {downloads.map(([name, icon, ls], i) => (
              <Download key={i} $first={i === 0}>
                <FileIcon>{icon}</FileIcon>
                <DownloadName $ls={ls}>{name}</DownloadName>
                <svg width="10" height="7" viewBox="0 0 10 7" fill="none" stroke="#b5b5b5" strokeWidth="1.400"><path d="M1 6l4-4.500L9 6" /></svg>
              </Download>
            ))}
            <ShowAll>Show all</ShowAll>
            <ShelfClose><CloseMark color="#c0c0c0" size={11} /></ShelfClose>
          </Shelf>
        </Browser>
      </Body>
    </Desktop>
  );
}
